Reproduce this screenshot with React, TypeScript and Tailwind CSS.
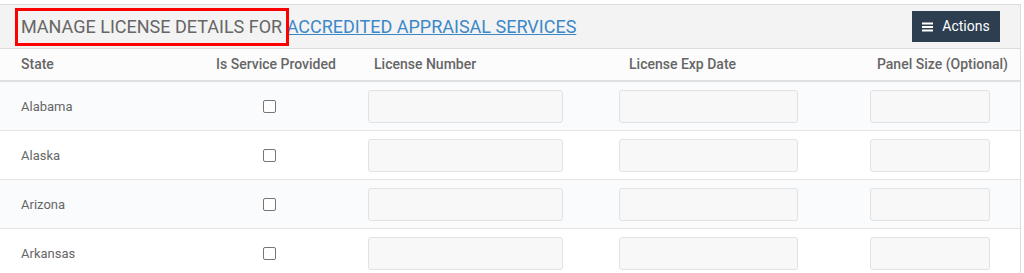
import { useState } from "react";

const STATES = ["Alabama", "Alaska", "Arizona", "Arkansas"];

const StateRow = ({ name, idx }: { name: string; idx: number }) => {
  const [checked, setChecked] = useState(false);
  return (
    <div
      className={`flex h-[49px] items-center border-b border-[#e3e3e3] ${
        idx % 2 === 0 ? "bg-[#fafbfd]" : "bg-white"
      }`}
    >
      <div className="w-[242px] pl-[21px] pt-[2px] text-[13px] text-[#666]">{name}</div>
      <div className="flex w-[55px] justify-center">
        <input
          type="checkbox"
          checked={checked}
          onChange={() => setChecked(!checked)}
          className="h-[13px] w-[13px] appearance-none rounded-[2px] border border-[#767676] bg-white"
        />
      </div>
      <input className="ml-[71px] h-[33px] w-[195px] rounded-[3px] border border-[#e2e2e2] bg-[#f8f8f8]" />
      <input className="ml-[56px] h-[33px] w-[179px] rounded-[3px] border border-[#e2e2e2] bg-[#f8f8f8]" />
      <input className="ml-[72px] h-[33px] w-[120px] rounded-[3px] border border-[#e2e2e2] bg-[#f8f8f8]" />
    </div>
  );
};

export default function App() {
  return (
    <div className="bg-white pt-[4px] pr-[3px] font-['Roboto',sans-serif]">
      <div className="border-t border-r border-[#dcdcdc]">
        {/* Panel heading */}
        <div className="relative flex h-[44px] items-center justify-between border-b border-[#dcdcdc] bg-[#f3f3f3] pl-[21px] pr-[20px]">
          <div className="text-[18px] uppercase text-[#666]">
            Manage License Details For{" "}
            <a href="#" className="text-[#3b88c8] underline">
              Accredited Appraisal Services
            </a>
          </div>
          <div className="pointer-events-none absolute left-[15px] top-[3px] h-[38px] w-[274px] border-[3px] border-[#ff0000]" />
          <button className="flex h-[31px] w-[88px] items-center justify-center gap-[9px] bg-[#2c3e50] text-[14px] text-white">
            <svg width="11" height="10" viewBox="0 0 11 10" fill="white">
              <rect x="0" y="0.5" width="11" height="2" />
              <rect x="0" y="4" width="11" height="2" />
              <rect x="0" y="7.5" width="11" height="2" />
            </svg>
            Actions
          </button>
        </div>

        {/* Table header */}
        <div className="flex h-[33px] items-center border-b-2 border-[#e0e0e0] bg-[#fcfcfc] text-[14px] font-medium text-[#666]">
          <div className="w-[216px] pl-[21px]">State</div>
          <div className="w-[158px]">Is Service Provided</div>
          <div className="w-[255px]">License Number</div>
          <div className="flex-1">License Exp Date</div>
          <div className="pr-[12px]">Panel Size (Optional)</div>
        </div>

        {/* Table body */}
        <div className="h-[192px] overflow-y-scroll [&::-webkit-scrollbar]:w-[15px] [&::-webkit-scrollbar-thumb]:bg-[#c1c1c1] [&::-webkit-scrollbar-track]:bg-[#c1c1c1]">
          {STATES.map((s, i) => (
            <StateRow key={s} name={s} idx={i} />
          ))}
        </div>
      </div>
    </div>
  );
}
